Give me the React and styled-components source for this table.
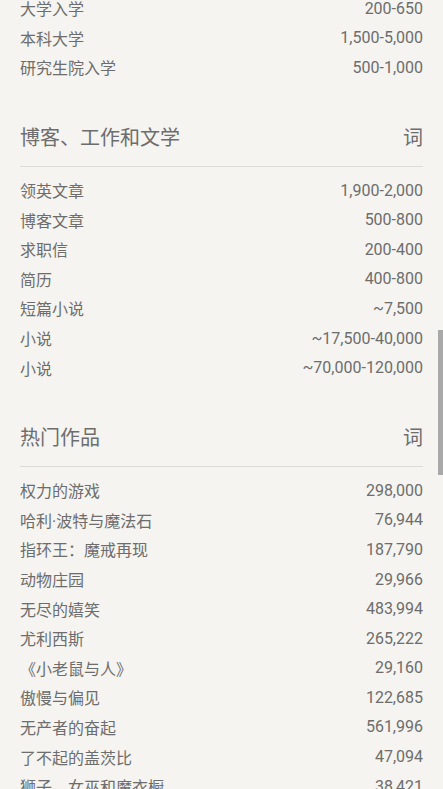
import React from "react";
import styled, { createGlobalStyle } from "styled-components";

const GlobalStyle = createGlobalStyle`
  html, body {
    margin: 0;
    padding: 0;
    background: #f5f4f0;
    overflow: hidden;
  }
  body {
    font-family: Roboto, "Noto Sans CJK SC", sans-serif;
    color: #6d6d6d;
  }
`;

const sections = [
  {
    title: null,
    rows: [
      ["大学入学", "200-650"],
      ["本科大学", "1,500-5,000"],
      ["研究生院入学", "500-1,000"],
    ],
  },
  {
    title: "博客、工作和文学",
    rows: [
      ["领英文章", "1,900-2,000"],
      ["博客文章", "500-800"],
      ["求职信", "200-400"],
      ["简历", "400-800"],
      ["短篇小说", "~7,500"],
      ["小说", "~17,500-40,000"],
      ["小说", "~70,000-120,000"],
    ],
  },
  {
    title: "热门作品",
    rows: [
      ["权力的游戏", "298,000"],
      ["哈利·波特与魔法石", "76,944"],
      ["指环王：魔戒再现", "187,790"],
      ["动物庄园", "29,966"],
      ["无尽的嬉笑", "483,994"],
      ["尤利西斯", "265,222"],
      ["《小老鼠与人》", "29,160"],
      ["傲慢与偏见", "122,685"],
      ["无产者的奋起", "561,996"],
      ["了不起的盖茨比", "47,094"],
      ["狮子、女巫和魔衣橱", "38,421"],
    ],
  },
];

function App() {
  return (
    <>
      <GlobalStyle />
      <Page>
        {sections.map((s, i) => (
          <Section key={i} first={!s.title}>
            {s.title && (
              <>
                <Header>
                  <span>{s.title}</span>
                  <span>词</span>
                </Header>
                <Divider />
              </>
            )}
            {s.rows.map(([name, count], j) => (
              <Row key={j}>
                <span>{name}</span>
                <Count>{count}</Count>
              </Row>
            ))}
          </Section>
        ))}
      </Page>
      <ScrollThumb />
    </>
  );
}

const Page = styled.div`
  padding: 0 20px;
  margin-top: -6.5px;
`;

const Section = styled.section`
  margin-top: ${(props) => (props.first ? "0" : "34.5px")};
`;

const Header = styled.div`
  display: flex;
  justify-content: space-between;
  align-items: center;
  height: 40px;
  font-size: 20px;
`;

const Divider = styled.div`
  height: 1px;
  background: #dcdbd7;
  margin: 9px 0 8.5px;
`;

const Row = styled.div`
  display: flex;
  justify-content: space-between;
  align-items: center;
  height: 29.6px;
  font-size: 16px;
`;

const Count = styled.span`
  font-variant-numeric: tabular-nums;
`;

const ScrollThumb = styled.div`
  position: fixed;
  right: 0;
  top: 330px;
  width: 5px;
  height: 145px;
  background: #a9a9a9;
`;

export default App;
